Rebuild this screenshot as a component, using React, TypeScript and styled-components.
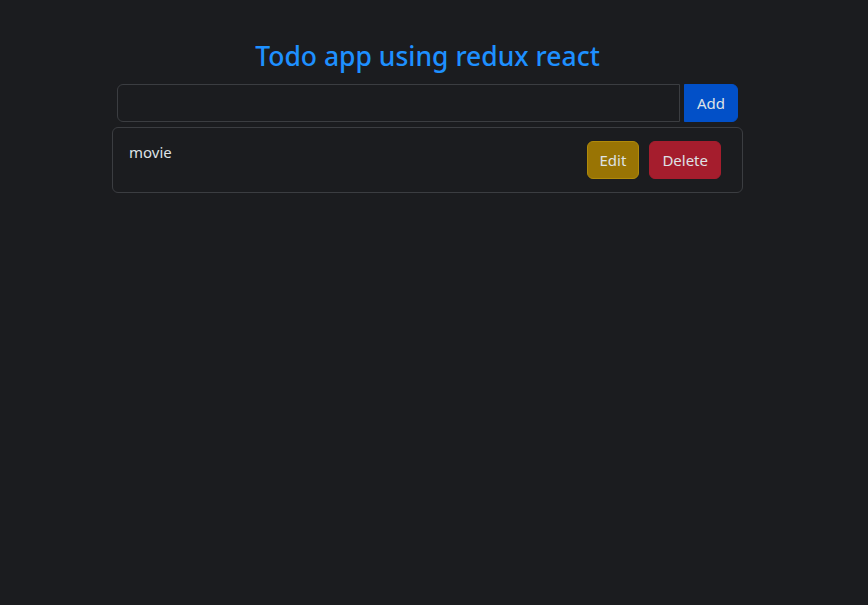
import React from "react";
import styled, { createGlobalStyle } from "styled-components";

const GlobalStyle = createGlobalStyle`
  html, body {
    margin: 0;
    padding: 0;
    background: #1b1c1f;
    color: #dee2e6;
    font-family: "Noto Sans", "Open Sans", sans-serif;
    font-size: 16px;
  }
  * { box-sizing: border-box; }
`;

const Page = styled.div`
  min-height: 605px;
  padding-top: 38px;
`;

const Column = styled.div`
  width: 631px;
  margin-left: 112px;
  display: flex;
  flex-direction: column;
`;

const Title = styled.h2`
  margin: 0 0 10px;
  text-align: center;
  color: #1e90ff;
  font-size: 26.5px;
  font-weight: 500;
  line-height: 36px;
`;

const Form = styled.form`
  display: flex;
  gap: 4px;
  padding: 0 5px;
  margin-bottom: 5px;
`;

const Input = styled.input`
  flex: 1;
  height: 38px;
  background: #1b1c1f;
  border: 1px solid #3b3d41;
  border-radius: 6px 0 0 6px;
  color: #dee2e6;
  font: inherit;
  padding: 6px 12px;
  outline: none;
`;

const Button = styled.button<{ $bg: string; $border: string }>`
  height: 38px;
  padding: 0 12px;
  background: ${(p) => p.$bg};
  border: 1px solid ${(p) => p.$border};
  border-radius: 6px;
  color: #dee2e6;
  font: inherit;
  font-size: 15px;
  cursor: pointer;
`;

const AddButton = styled(Button)`
  border-radius: 0 6px 6px 0;
`;

const Card = styled.div`
  display: flex;
  justify-content: space-between;
  align-items: flex-start;
  min-height: 66px;
  border: 1px solid #3b3d41;
  border-radius: 6px;
  padding: 13px 21px 13px 16px;
`;

const ItemText = styled.span`
  font-size: 15px;
  line-height: 22px;
  color: #dee2e6;
`;

const Actions = styled.div`
  display: flex;
  gap: 10px;
`;

export default function App() {
  return (
    <Page>
      <GlobalStyle />
      <Column>
        <Title>Todo app using redux react</Title>
        <Form onSubmit={(e) => e.preventDefault()}>
          <Input type="text" />
          <AddButton type="submit" $bg="#0250c8" $border="#0250c8">
            Add
          </AddButton>
        </Form>
        <Card>
          <ItemText>movie</ItemText>
          <Actions>
            <Button $bg="#997404" $border="#b08a0a">Edit</Button>
            <Button $bg="#a51d2d" $border="#a51d2d">Delete</Button>
          </Actions>
        </Card>
      </Column>
    </Page>
  );
}
